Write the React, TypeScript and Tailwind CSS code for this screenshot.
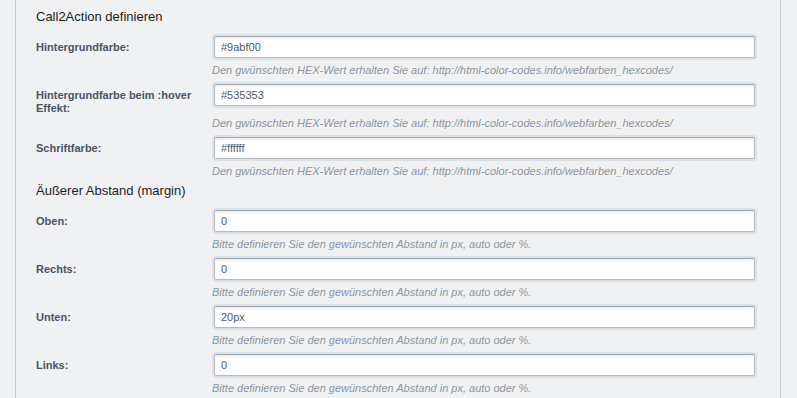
const hexHelp = 'Den gwünschten HEX-Wert erhalten Sie auf: http://html-color-codes.info/webfarben_hexcodes/';
const marginHelp = 'Bitte definieren Sie den gewünschten Abstand in px, auto oder %.';

type Field = { label: string; value: string; help: string };

const colorFields: Field[] = [
  { label: 'Hintergrundfarbe:', value: '#9abf00', help: hexHelp },
  { label: 'Hintergrundfarbe beim :hover Effekt:', value: '#535353', help: hexHelp },
  { label: 'Schriftfarbe:', value: '#ffffff', help: hexHelp },
];

const marginFields: Field[] = [
  { label: 'Oben:', value: '0', help: marginHelp },
  { label: 'Rechts:', value: '0', help: marginHelp },
  { label: 'Unten:', value: '20px', help: marginHelp },
  { label: 'Links:', value: '0', help: marginHelp },
];

function FieldRow({ field }: { field: Field }) {
  return (
    <div className="grid grid-cols-[176px_545px] pb-[5px]">
      <label className="-mb-[2px] pt-[7px] pr-4 text-[11px] font-bold leading-[13px] text-[#4a5462]">
        {field.label}
      </label>
      <div className="pt-[2px] pl-[2px] pb-[2px]">
        <input
          readOnly
          value={field.value}
          className="block h-[22px] w-[541px] rounded-[2px] border border-[#b4bdc6] border-t-[#9ea9b4] bg-white px-[6px] text-[11px] text-[#4b5a6b] shadow-[0_0_0_2px_#dce1e6,inset_0_2px_3px_rgba(0,0,0,0.07)] outline-none"
        />
      </div>
      <div />
      <p className="mt-[3px] text-[11px] italic leading-[14px] text-[#8d969e]">{field.help}</p>
    </div>
  );
}

export default function App() {
  return (
    <div className="h-[398px] w-full overflow-hidden bg-[#f0f1f3] font-['Liberation_Sans',Arial,sans-serif]">
      <div className="ml-[15px] h-full w-[766px] border-x border-[#c9ced5] pl-[20px] pt-[8px]">
        <h3 className="mb-[8px] text-[13px] leading-[18px] text-[#1c1c1c]">Call2Action definieren</h3>
        {colorFields.map((f) => (
          <FieldRow key={f.label} field={f} />
        ))}
        <h3 className="mb-[8px] mt-[-1px] text-[13px] leading-[18px] text-[#1c1c1c]">Äußerer Abstand (margin)</h3>
        {marginFields.map((f) => (
          <FieldRow key={f.label} field={f} />
        ))}
      </div>
    </div>
  );
}
